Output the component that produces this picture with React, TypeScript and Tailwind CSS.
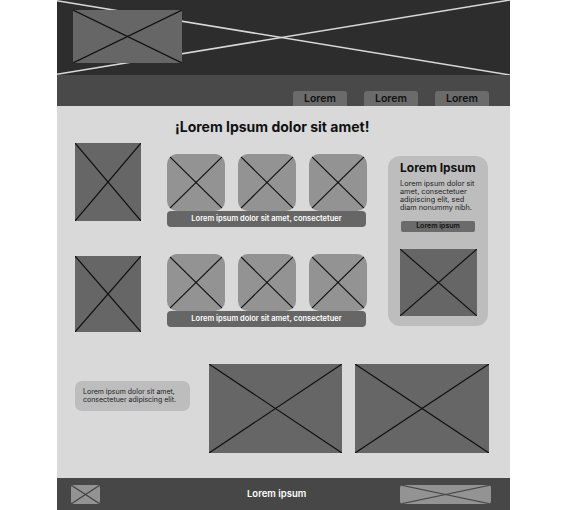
import React from 'react'

type PhProps = { className?: string; stroke?: string; sw?: number }

function Ph({ className = '', stroke = '#111111', sw = 1.2 }: PhProps) {
  return (
    <div className={`relative overflow-hidden shrink-0 ${className}`}>
      <svg className="absolute inset-0 h-full w-full" viewBox="0 0 100 100" preserveAspectRatio="none">
        <line x1="0" y1="0" x2="100" y2="100" stroke={stroke} strokeWidth={sw} vectorEffect="non-scaling-stroke" />
        <line x1="100" y1="0" x2="0" y2="100" stroke={stroke} strokeWidth={sw} vectorEffect="non-scaling-stroke" />
      </svg>
    </div>
  )
}

function TileRow({ top = '' }: { top?: string }) {
  return (
    <div className={`ml-[26px] flex w-[200px] flex-col ${top}`}>
      <div className="flex gap-[13px]">
        <Ph className="h-[57px] w-[58px] rounded-[10px] bg-[#939393]" />
        <Ph className="h-[57px] w-[58px] rounded-[10px] bg-[#939393]" />
        <Ph className="h-[57px] w-[58px] rounded-[10px] bg-[#939393]" />
      </div>
      <div className="flex h-[16px] w-[199px] items-center justify-center rounded-[4px] bg-[#666666] text-[7.5px] font-semibold text-white">
        Lorem ipsum dolor sit amet, consectetuer
      </div>
    </div>
  )
}

export default function App() {
  return (
    <div className="min-h-[510px] w-full bg-white" style={{ fontFamily: 'Inter, "Liberation Sans", sans-serif' }}>
      <div className="mx-auto w-[453px]">
        {/* header */}
        <header className="relative h-[75px] bg-[#2d2d2d]">
          <svg className="absolute inset-0 h-full w-full" viewBox="0 0 100 100" preserveAspectRatio="none">
            <line x1="0" y1="1" x2="100" y2="100" stroke="#d8d8d8" strokeWidth={1.5} vectorEffect="non-scaling-stroke" />
            <line x1="100" y1="0" x2="0" y2="99" stroke="#d8d8d8" strokeWidth={1.5} vectorEffect="non-scaling-stroke" />
          </svg>
          <div className="relative pl-[16px] pt-[10px]">
            <Ph className="h-[53px] w-[109px] bg-[#666666]" />
          </div>
        </header>

        {/* nav */}
        <nav className="flex h-[31px] items-end justify-end gap-[17px] bg-[#494949] pr-[21px]">
          {['Lorem', 'Lorem', 'Lorem'].map((l, i) => (
            <button key={i} className="flex h-[15px] w-[54px] items-center justify-center rounded-t-[3px] bg-[#6b6b6b] text-[10.5px] font-semibold text-[#111111]">
              {l}
            </button>
          ))}
        </nav>

        {/* main */}
        <main className="flex h-[372px] flex-col bg-[#d9d9d9] px-[18px]">
          <h1 className="pl-[100px] pt-[11px] text-[14px] font-bold leading-[20px] text-[#111111]">
            ¡Lorem Ipsum dolor sit amet!
          </h1>

          <div className="mt-[6px] flex items-start">
            <div className="flex w-[293px] flex-col">
              <div className="flex items-start">
                <Ph className="h-[78px] w-[66px] bg-[#666666]" />
                <TileRow top="mt-[11px]" />
              </div>
              <div className="mt-[27px] flex items-start">
                <Ph className="mt-[2px] h-[76px] w-[66px] bg-[#666666]" />
                <TileRow />
              </div>
            </div>

            <aside className="ml-[20px] mt-[13px] flex h-[170px] w-[100px] flex-col rounded-[12px] bg-[#bdbdbd] px-[12px] pt-[5px]">
              <h2 className="text-[12px] font-bold leading-[14px] text-[#111111]">Lorem Ipsum</h2>
              <p className="mt-[5px] text-[7.3px] leading-[8px] text-[#222222]">
                Lorem ipsum dolor sit
                <br />
                amet, consectetuer
                <br />
                adipiscing elit, sed
                <br />
                diam nonummy nibh.
              </p>
              <button className="ml-[1px] mt-[9px] flex h-[11px] w-[74px] items-center justify-center rounded-[2px] bg-[#6b6b6b] text-[7px] font-semibold text-[#111111]">
                Lorem ipsum
              </button>
              <Ph className="mt-[17px] h-[67px] w-[77px] bg-[#666666]" />
            </aside>
          </div>

          <div className="mt-[32px] flex items-start">
            <div className="mt-[17px] flex h-[30px] w-[115px] shrink-0 items-center rounded-[7px] bg-[#bdbdbd] px-[8px] text-[7px] leading-[8px] text-[#222222]">
              <span>
                Lorem ipsum dolor sit amet,
                <br />
                consectetuer adipiscing elit.
              </span>
            </div>
            <Ph className="ml-[19px] h-[89px] w-[133px] bg-[#666666]" />
            <Ph className="ml-[13px] h-[89px] w-[134px] bg-[#666666]" />
          </div>
        </main>

        {/* footer */}
        <footer className="flex h-[32px] items-center bg-[#474747] pl-[14px] pr-[19px]">
          <Ph className="h-[19px] w-[29px] rounded-[3px] bg-[#939393]" stroke="#444444" />
          <span className="ml-[147px] text-[9.5px] font-semibold text-white">Lorem ipsum</span>
          <Ph className="ml-auto h-[19px] w-[91px] rounded-[3px] bg-[#939393]" stroke="#444444" />
        </footer>
      </div>
    </div>
  )
}
